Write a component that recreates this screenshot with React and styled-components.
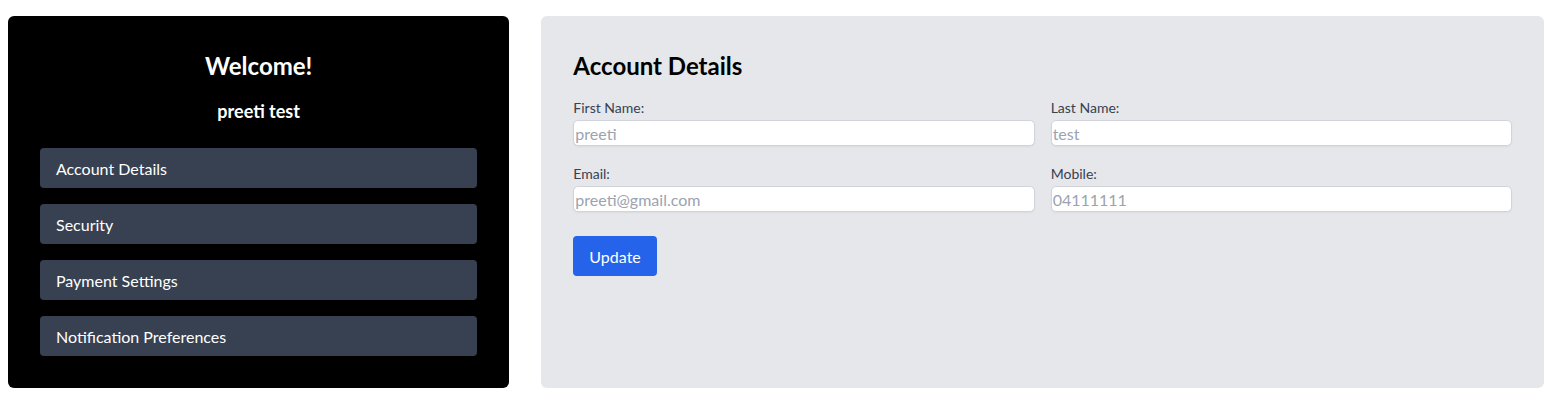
import React from 'react'
import styled, { createGlobalStyle } from 'styled-components'

const GlobalStyle = createGlobalStyle`
  body {
    margin: 0;
    font-family: Lato, "Open Sans", sans-serif;
    background: #ffffff;
  }
`;

const Page = styled.div`
  display: grid;
  grid-template-columns: 1fr 2fr;
  gap: 32px;
  width: 1536px;
  padding: 16px 0 0 8px;
`;

const Sidebar = styled.aside`
  background: #000000;
  border-radius: 6px;
  padding: 32px;
  color: #ffffff;
  display: flex;
  flex-direction: column;
`;

const Welcome = styled.h2`
  margin: 2px 0 0;
  font-size: 24px;
  line-height: 32px;
  font-weight: 700;
  text-align: center;
`;

const UserName = styled.p`
  margin: 15px 0 23px;
  font-size: 18px;
  line-height: 28px;
  font-weight: 700;
  text-align: center;
`;

const Menu = styled.nav`
  display: flex;
  flex-direction: column;
  gap: 16px;
`;

const MenuItem = styled.button`
  height: 40px;
  padding: 0 16px;
  border: none;
  border-radius: 4px;
  background: #374151;
  color: #ffffff;
  font-family: inherit;
  font-size: 16px;
  text-align: left;
  cursor: pointer;
`;

const Main = styled.main`
  background: #e5e7eb;
  border-radius: 6px;
  padding: 32px;
  height: 372px;
  box-sizing: border-box;
`;

const Title = styled.h2`
  margin: 2px 0 16px;
  font-size: 24px;
  line-height: 32px;
  font-weight: 700;
  color: #000000;
`;

const Grid = styled.div`
  display: grid;
  grid-template-columns: 1fr 1fr;
  column-gap: 16px;
  row-gap: 18px;
`;

const Field = styled.label`
  display: flex;
  flex-direction: column;
  gap: 2px;
`;

const LabelText = styled.span`
  font-size: 14px;
  line-height: 20px;
  color: #374151;
`;

const Input = styled.input`
  height: 26px;
  box-sizing: border-box;
  padding: 0 1px;
  border: 1px solid #d1d5db;
  border-radius: 5px;
  background: #ffffff;
  box-shadow: 0 1px 2px rgba(0, 0, 0, 0.05);
  font-family: inherit;
  font-size: 16px;
  &::placeholder {
    color: #9ca3af;
  }
`;

const UpdateButton = styled.button`
  margin-top: 24px;
  height: 40px;
  padding: 0 16px;
  border: none;
  border-radius: 4px;
  background: #2563eb;
  color: #ffffff;
  font-family: inherit;
  font-size: 16px;
  cursor: pointer;
`;

const menu = ['Account Details', 'Security', 'Payment Settings', 'Notification Preferences'];

const fields = [
  { label: 'First Name:', value: 'preeti' },
  { label: 'Last Name:', value: 'test' },
  { label: 'Email:', value: 'preeti@gmail.com' },
  { label: 'Mobile:', value: '04111111' },
];

export default function App() {
  return (
    <>
      <GlobalStyle />
      <Page>
        <Sidebar>
          <Welcome>Welcome!</Welcome>
          <UserName>preeti test</UserName>
          <Menu>
            {menu.map((m) => (
              <MenuItem key={m}>{m}</MenuItem>
            ))}
          </Menu>
        </Sidebar>
        <Main>
          <Title>Account Details</Title>
          <Grid>
            {fields.map((f) => (
              <Field key={f.label}>
                <LabelText>{f.label}</LabelText>
                <Input placeholder={f.value} />
              </Field>
            ))}
          </Grid>
          <UpdateButton>Update</UpdateButton>
        </Main>
      </Page>
    </>
  )
}
